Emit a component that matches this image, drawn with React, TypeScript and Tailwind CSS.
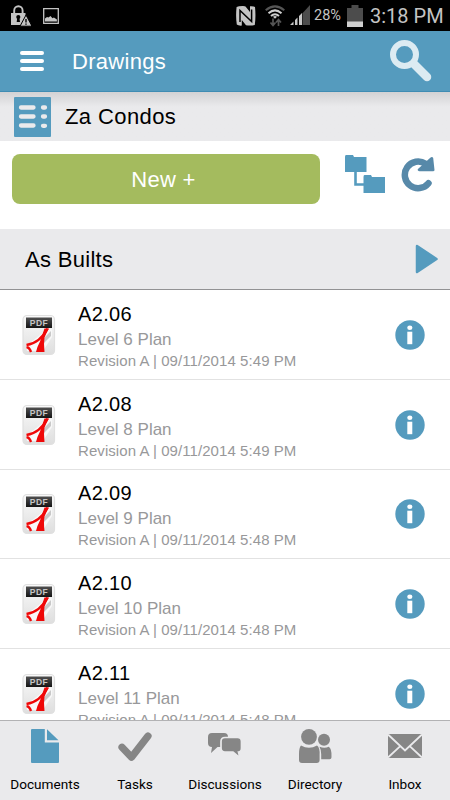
const drawings = [
  { id: 1, number: "A2.06", title: "Level 6 Plan", revision: "Revision A | 09/11/2014 5:49 PM" },
  { id: 2, number: "A2.08", title: "Level 8 Plan", revision: "Revision A | 09/11/2014 5:49 PM" },
  { id: 3, number: "A2.09", title: "Level 9 Plan", revision: "Revision A | 09/11/2014 5:48 PM" },
  { id: 4, number: "A2.10", title: "Level 10 Plan", revision: "Revision A | 09/11/2014 5:48 PM" },
  { id: 5, number: "A2.11", title: "Level 11 Plan", revision: "Revision A | 09/11/2014 5:48 PM" },
];

const StatusBar = () => (
  <div className="flex h-[31px] shrink-0 items-center bg-black pl-[11px] pr-[6px] font-['Roboto',sans-serif] text-[#c4c4c4]">
    <svg width="20" height="22" viewBox="0 0 20 22" className="shrink-0">
      <path d="M3.2 9V5.5a4.2 4.2 0 0 1 8.4 0V9" fill="none" stroke="#c4c4c4" strokeWidth="1.9" />
      <path d="M0 8h14.5v3.5L10 20H0z" fill="#c4c4c4" />
      <circle cx="7.3" cy="12" r="2.1" fill="#000" />
      <path d="M6.3 12h2l.7 5H5.7z" fill="#000" />
      <path d="M15 10l6 11.2H9z" fill="#c4c4c4" stroke="#000" />
      <path d="M15 14v3.4M15 18.4v1.3" stroke="#000" strokeWidth="1.4" />
    </svg>
    <svg width="16" height="16" viewBox="0 0 16 16" className="ml-[12px] shrink-0">
      <path d="M.7.7h14.6v14.6H.7z" fill="none" stroke="#c4c4c4" strokeWidth="1.3" />
      <path d="M2 13.5v-3l2-1.4 1.4.5L7.5 8l2 2.2 1.4-.8 3 2v2.1z" fill="#c4c4c4" />
    </svg>
    <div className="flex-1" />
    <svg width="20" height="20" viewBox="0 0 20 20" className="shrink-0">
      <path d="M3 .3Q9-.3 9.5.6L14 6V.2q4-.2 5 .8 1 9-.2 18-4 .9-8.8.3L5.8 14v5.6q-3.5.2-5-1Q-.5 10 .6 1z" fill="#c4c4c4" />
      <path d="M4 16V4.5L15.6 15.5V3.5" fill="none" stroke="#000" strokeWidth="1.5" />
    </svg>
    <svg width="20" height="22" viewBox="0 0 20 22" className="ml-[9px] shrink-0" fill="none">
      <path d="M.7 5.2Q10-2.4 19.3 5.2" stroke="#555" strokeWidth="2" />
      <path d="M3.5 8.2Q10 2.6 16.5 8.2M6 11Q10 7.4 14 11" stroke="#d0d0d0" strokeWidth="2" />
      <path d="M8 11.8q2-1.5 4 0l-2 2z" fill="#d0d0d0" />
      <path d="M8 13.5V20M5.5 17.5L8 20.5l2.5-3M13.5 21v-6M11 17.5l2.5-3 2.5 3" stroke="#555" strokeWidth="1.7" />
    </svg>
    <svg width="20" height="21" viewBox="0 0 20 21" className="ml-[5px] shrink-0">
      <path d="M12.5 8.2L20 0v20h-7.5z" fill="#4c4c4c" />
      <path d="M0 20l3.5-3.5V20zM5 15l2.5-2.5V20H5zM9 11l3-3v12H9z" fill="#c8c8c8" />
    </svg>
    <span className="ml-[4px] w-[28px] whitespace-nowrap text-[14.5px]">28%</span>
    <svg width="16" height="22" viewBox="0 0 16 22" className="ml-[5px] shrink-0">
      <path d="M4.5 0h7v3H16v19H0V3h4.5z" fill="#4c4c4c" />
      <path d="M0 16.5h16V22H0z" fill="#cfcfcf" />
    </svg>
    <span className="ml-[7px] w-[74px] whitespace-nowrap text-[20px]">3:18 PM</span>
  </div>
);

const PdfIcon = () => (
  <svg width="34" height="42" viewBox="0 0 34 42" className="shrink-0">
    <defs>
      <linearGradient id="paper" x1="0" y1="0" x2="0" y2="1">
        <stop offset="0" stopColor="#fafafa" />
        <stop offset="1" stopColor="#dedede" />
      </linearGradient>
      <linearGradient id="label" x1="0" y1="0" x2="0" y2="1">
        <stop offset="0" stopColor="#505050" />
        <stop offset="1" stopColor="#151515" />
      </linearGradient>
    </defs>
    <rect x="1" y="1.5" width="31.5" height="39" rx="4" fill="url(#paper)" stroke="#e0e0e0" strokeWidth="1.2" />
    <path d="M4 32L27 14l3 2v7l-9 14H5z" fill="#f8f8f8" />
    <path d="M22 24l7-7v5l-9 9z" fill="#c9c9c9" />
    <rect x="4" y="3.5" width="26" height="10.5" fill="url(#label)" />
    <text x="17" y="12" textAnchor="middle" fontSize="8.5" fontWeight="bold" letterSpacing="0.5" fill="#c5c5c5" className="font-['Liberation_Sans',sans-serif]">
      PDF
    </text>
    <path d="M22.5 14.5h4.5q-3 5-4.500 9-1 6 0 14.500h-8.500q1-5 4-10.500z" fill="#ef0808" />
    <path d="M25.500 14.500Q18 29 4.500 31M4.500 33q3 .5 4.500 5" fill="none" stroke="#ef0808" strokeWidth="2.400" />
  </svg>
);

const InfoIcon = () => (
  <svg width="30" height="30" viewBox="0 0 30 30" className="shrink-0">
    <circle cx="15" cy="15" r="14.7" fill="#559bbe" />
    <ellipse cx="14.8" cy="7.7" rx="2.600" ry="2.200" fill="#fff" />
    <path d="M12.300 11.700h5v12.500h-5z" fill="#fff" />
  </svg>
);

const tabs = [
  {
    label: "Documents",
    icon: (
      <svg width="30" height="36" viewBox="0 0 30 36" fill="#559bbe">
        <path d="M2 1h12.800v13.500H29V34a1 1 0 0 1-1 1H2a1 1 0 0 1-1-1V2a1 1 0 0 1 1-1z" />
        <path d="M17 1.300L28.500 12.300H17z" />
      </svg>
    ),
  },
  {
    label: "Tasks",
    icon: (
      <svg width="36" height="36" viewBox="0 0 36 36">
        <path d="M5 19.200l9.500 10L31 8" fill="none" stroke="#868686" strokeWidth="7.200" strokeLinecap="round" strokeLinejoin="round" />
      </svg>
    ),
  },
  {
    label: "Discussions",
    icon: (
      <svg width="36" height="36" viewBox="0 0 36 36">
        <path d="M5 5h12q4 0 4 4v6q0 4-4 4h-6.500l-6.500 6 1-6q-4 0-4-4V9q0-4 4-4z" fill="#868686" />
        <path d="M18 9.500h12.500q4 0 4 4V20q0 4-3 4l1.500 6-7-6h-8q-4 0-4-4v-6.500q0-4 4-4z" fill="#868686" stroke="#eaeaec" strokeWidth="1.700" />
      </svg>
    ),
  },
  {
    label: "Directory",
    icon: (
      <svg width="36" height="36" viewBox="0 0 36 36" fill="#868686">
        <circle cx="12" cy="8.800" r="7.900" />
        <path d="M4 17.500q8 4.500 16 0 3 2 2.600 9.500v5q0 3-3 3H5q-3 0-3-3v-6q0-6.500 2-8.500z" />
        <circle cx="27" cy="11.700" r="6" />
        <path d="M22.500 18.800q5 2 9.300 0 3.200 2 2.700 10.500 0 2-2 2h-8.300v-5q0-4.500-1.700-7.500z" />
      </svg>
    ),
  },
  {
    label: "Inbox",
    icon: (
      <svg width="36" height="36" viewBox="0 0 36 36">
        <path d="M1 6h34v24H1z" fill="#868686" />
        <path d="M1 6.500l17 16 17-16M1 29.500L13 18.300M35 29.500L23 18.300" fill="none" stroke="#eaeaec" strokeWidth="1.800" />
      </svg>
    ),
  },
];

const App = () => {
  return (
    <main className="flex h-[800px] w-[450px] flex-col overflow-hidden bg-white font-['Liberation_Sans',Arial,sans-serif] text-black">
      <StatusBar />

      <header className="flex h-[61px] shrink-0 items-center border-b border-[#3f8cb3] bg-[#559bbe] pl-[20px] pr-[18px]">
        <div className="flex flex-col gap-[4px]">
          <span className="h-[4px] w-6 rounded-full bg-white" />
          <span className="h-[4px] w-6 rounded-full bg-white" />
          <span className="h-[4px] w-6 rounded-full bg-white" />
        </div>
        <h1 className="ml-[28px] flex-1 pt-px text-[22px] leading-[28px] tracking-[0.3px] text-white">Drawings</h1>
        <svg width="42" height="42" viewBox="0 0 42 42">
          <circle cx="14.5" cy="14.5" r="11.5" fill="none" stroke="#dcebf2" strokeWidth="6" />
          <path d="M24 24l13 13" stroke="#dcebf2" strokeWidth="8.500" strokeLinecap="round" />
        </svg>
      </header>

      <section className="flex h-[49px] shrink-0 items-center bg-linear-to-b from-[#d2d2d4] via-[#eaeaec] via-30% to-[#eaeaec] pl-[14px]">
        <svg width="37" height="40" viewBox="0 0 37 40">
          <rect width="37" height="40" rx="1" fill="#559bbe" />
          <path d="M7 10.500h12.500M7 19.500h12.500M7 28.500h12.500M29 10.500h2M29 19.500h2M29 28.800h2" stroke="#eaeaec" strokeWidth="4.300" strokeLinecap="round" />
        </svg>
        <h2 className="ml-[14px] text-[22px] leading-[28px] tracking-[0.400px]">Za Condos</h2>
      </section>

      <section className="flex h-[88px] shrink-0 items-start pl-[12px] pt-[13px]">
        <button className="h-[50px] w-[308px] rounded-[8px] bg-[#a4bb5e] pr-[5px] text-[22px] tracking-[0.300px] text-white">
          New +
        </button>
        <svg width="42" height="40" viewBox="0 0 42 40" className="ml-[24px]">
          <path d="M11.500 17v13.500H20" fill="none" stroke="#559bbe" strokeWidth="2.600" />
          <path d="M1 3q0-2 1-2h7l1 2h12.500v15H1zM19.500 23q0-2 1-2H27l1 2h13v16H19.500z" fill="#559bbe" />
        </svg>
        <svg width="36" height="36" viewBox="0 0 36 36" className="ml-[14px] mt-[2px]">
          <path d="M28.500 27.200A13.300 13.300 0 1 1 25.500 7.800" fill="none" stroke="#5789a9" strokeWidth="6.500" strokeLinecap="round" />
          <path d="M18 14.600q-.8-1.200.5-2L30 2q2.200-2.200 3.200 0L34.500 14q0 1.300-1.500 1.300H19.500q-1.200 0-1.500-.7z" fill="#5789a9" />
        </svg>
      </section>

      <section className="flex h-[61px] shrink-0 items-center border-b border-[#929294] bg-[#eaeaec] pl-[25px] pr-[12px]">
        <h2 className="flex-1 pt-px text-[22px] leading-[28px] tracking-[0.300px]">As Builts</h2>
        <svg width="23" height="30" viewBox="0 0 23 30">
          <path d="M2 2l19.500 13L2 28z" fill="#559bbe" stroke="#559bbe" strokeWidth="2.500" strokeLinejoin="round" />
        </svg>
      </section>

      <ul className="min-h-0 flex-1 overflow-hidden pt-[0.500px]">
        {drawings.map((drawing) => (
          <li key={drawing.id} className="flex h-[89.600px] items-center border-b border-[#e2e2e2] pl-[22px] pr-[25px] pt-px">
            <PdfIcon />
            <div className="ml-[22px] flex-1 whitespace-nowrap pt-[2px]">
              <h3 className="text-[20px] leading-[25px] tracking-[0.350px]">{drawing.number}</h3>
              <p className="text-[17px] leading-[25px] text-[#98989a]">{drawing.title}</p>
              <p className="text-[15px] leading-[18px] tracking-[0.070px] text-[#98989a]">{drawing.revision}</p>
            </div>
            <InfoIcon />
          </li>
        ))}
      </ul>

      <nav className="flex h-[80px] shrink-0 border-t border-[#b2b2b4] bg-[#eaeaec] font-['Roboto',sans-serif]">
        {tabs.map((tab) => (
          <a key={tab.label} className="flex w-[90px] flex-col items-center pt-[7px]">
            {tab.icon}
            <span className="mt-[10px] text-[13.600px] leading-[20px]">{tab.label}</span>
          </a>
        ))}
      </nav>
    </main>
  );
};

export default App;
